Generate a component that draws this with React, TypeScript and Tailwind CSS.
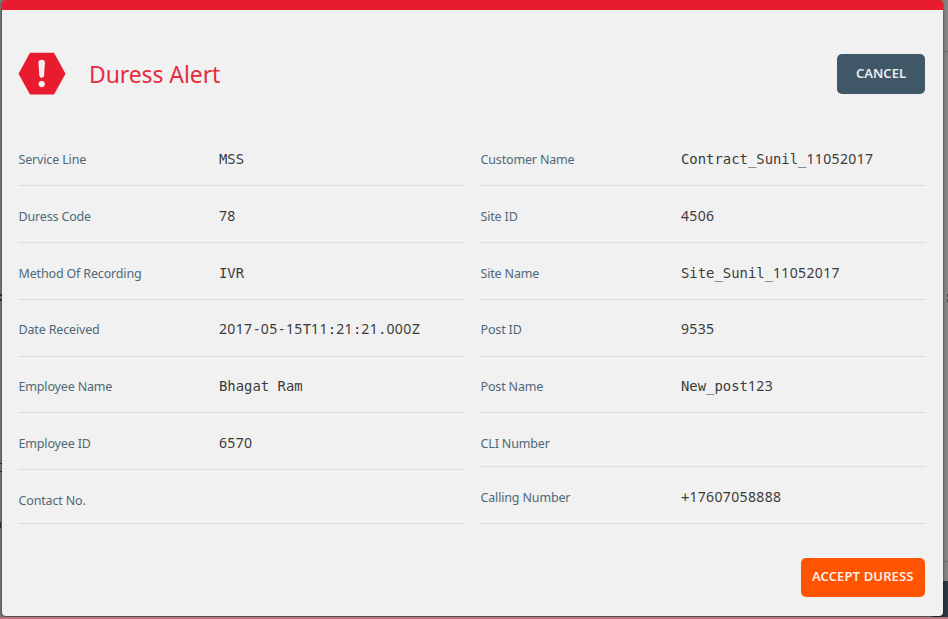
type Field = { label: string; value: string; height: string };

const tall = "h-[57px] pt-[21px]";
const upper = "h-[57px] pt-[20px]";
const mid = "h-[56px] pt-[20px]";
const short = "h-[54px] pt-[21px]";

const left: Field[] = [
  { label: "Service Line", value: "MSS", height: tall },
  { label: "Duress Code", value: "78", height: tall },
  { label: "Method Of Recording", value: "IVR", height: tall },
  { label: "Date Received", value: "2017-05-15T11:21:21.000Z", height: upper },
  { label: "Employee Name", value: "Bhagat Ram", height: mid },
  { label: "Employee ID", value: "6570", height: tall },
  { label: "Contact No.", value: "", height: short },
];

const right: Field[] = [
  { label: "Customer Name", value: "Contract_Sunil_11052017", height: tall },
  { label: "Site ID", value: "4506", height: tall },
  { label: "Site Name", value: "Site_Sunil_11052017", height: tall },
  { label: "Post ID", value: "9535", height: upper },
  { label: "Post Name", value: "New_post123", height: mid },
  { label: "CLI Number", value: "", height: short },
  { label: "Calling Number", value: "+17607058888", height: tall },
];

/* Digits use an undotted zero, spaced to the same advance as the mono face. */
function Value({ text }: { text: string }) {
  return (
    <span className="-mt-px whitespace-pre font-['DejaVu_Sans_Mono',monospace] text-[13.9px] leading-5 text-[#3b3b3b]">
      {text.split(/(\d+)/).map((part, i) =>
        /^\d/.test(part) ? (
          <span key={i} className="font-['Noto_Sans',sans-serif] text-[14px] tracking-[0.36px]">{part}</span>
        ) : (
          part
        ),
      )}
    </span>
  );
}

function Column({ fields }: { fields: Field[] }) {
  return (
    <div className="w-[446px]">
      {fields.map((f) => (
        <div key={f.label} className={`flex items-start border-b border-[#dcdcdc] ${f.height}`}>
          <span className="w-[201px] shrink-0 pl-[0.5px] text-[12.5px] leading-5 tracking-[-0.16px] text-[#4f6877]">
            {f.label}
          </span>
          <Value text={f.value} />
        </div>
      ))}
    </div>
  );
}

export default function App() {
  return (
    <div className="flex h-[619px] w-[948px] overflow-hidden border-b-2 border-[#bd737b] bg-[#828484] font-['Noto_Sans',sans-serif]">
      <div className="flex w-[2px] shrink-0 flex-col bg-[#777979] pt-[294px]">
        <div className="h-[7px] border-y-2 border-[#26343b]" />
        <div className="mt-[162px] h-[9px] border-y border-[#222]" />
        <div className="mt-[50px] h-[6px] w-px bg-[#26343b]" />
      </div>

      <main className="z-10 h-[615.5px] w-[941px] shrink-0 rounded-[4px] border-t-[10px] border-[#e81c2e] bg-[#f1f1f1] shadow-[0_1px_3px_rgba(0,0,0,0.6)]">
        <header className="flex h-[119px] items-start pt-[42px] pr-[18px] pl-[16px]">
          <svg className="h-[44px] w-[48px]" viewBox="0 0 48 44">
            <path d="M12 .8h24L47.5 21.7 36 42.6H12L.5 21.7Z" fill="#e81c2e" />
            <path d="M20.5 10.5q0-2.7 3.2-2.7t3.2 2.7l-.8 13.2q-.2 2-2.4 2t-2.4-2Z" fill="#f1f1f1" />
            <circle cx="23.7" cy="32.1" r="3.1" fill="#f1f1f1" />
          </svg>
          <h1 className="ml-[23px] text-[23px] leading-[44px] tracking-[-0.1px] text-[#e62c41]">Duress Alert</h1>
          <button className="mt-[2px] ml-auto h-[40px] w-[88px] rounded-[5px] bg-[#3f5767] text-[13px] font-semibold text-[#e9edef]">
            CANCEL
          </button>
        </header>
        <section className="flex gap-[16px] pl-[16px]">
          <Column fields={left} />
          <Column fields={right} />
        </section>
        <footer className="flex justify-end pt-[33.5px] pr-[18px]">
          <button className="h-[39px] w-[124.5px] rounded-[5px] bg-[#ff5500] text-[13px] font-semibold tracking-[0.13px] whitespace-nowrap text-[#ffece2]">
            ACCEPT DURESS
          </button>
        </footer>
      </main>

      <div className="-ml-[11px] flex w-[16px] shrink-0 flex-col items-end pt-[51px]">
        <div className="h-px w-[5px] bg-[#6c6e6e]" />
        <div className="mt-[242px] h-[3px] w-px bg-[#4e5050]" />
        <div className="mt-[2px] h-[3px] w-px bg-[#4e5050]" />
        <div className="mt-[259px] h-px w-[5px] bg-[#6c6e6e]" />
        <div className="mt-[19px] h-[36px] w-[16px] bg-[#293740]" />
      </div>
    </div>
  );
}
